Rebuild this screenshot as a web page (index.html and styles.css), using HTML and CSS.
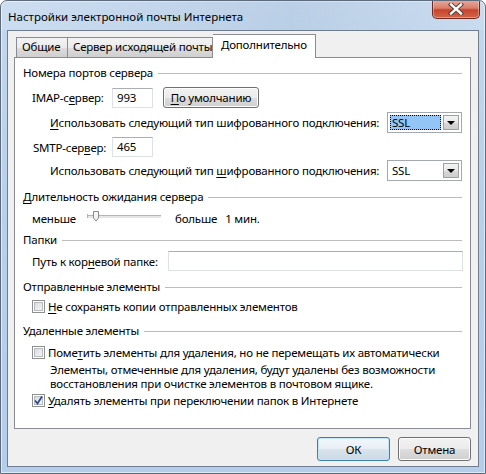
FILE: index.html
```html
<!DOCTYPE html>
<html lang="ru">
<head>
    <meta charset="UTF-8">
    <title>Настройки электронной почты Интернета</title>
    <link rel="stylesheet" href="styles.css">
</head>
<body>

<div class="window">
    <div class="titlebar">
        <span class="title">Настройки электронной почты Интернета</span>
        <div class="close">
            <svg width="16" height="12" viewBox="0 0 16 12">
                <path d="M3 1.5 L13 10.5 M13 1.5 L3 10.5" stroke="#4a3530" stroke-width="4.2" stroke-linecap="square"/>
                <path d="M3 1.5 L13 10.5 M13 1.5 L3 10.5" stroke="#fff" stroke-width="2.4" stroke-linecap="square"/>
            </svg>
        </div>
    </div>

    <div class="client">
        <div class="tabs">
            <div class="tab tab-1">Общие</div>
            <div class="tab tab-2">Сервер исходящей почты</div>
            <div class="tab tab-3 active">Дополнительно</div>
        </div>

        <div class="panel">
            <div class="group first"><span>Номера портов сервера</span></div>

            <div class="row row-imap">
                <label class="lbl-port">IMAP-с<u>е</u>рвер:</label>
                <div class="textbox port">993</div>
                <button class="btn btn-default-port"><u>П</u>о умолчанию</button>
            </div>

            <div class="row row-enc enc-1">
                <label><u>И</u>спользовать следующий тип шифрованного подключения:</label>
                <div class="combo focus">
                    <div class="combo-val">SSL</div>
                    <div class="combo-btn"><span class="arrow"></span></div>
                </div>
            </div>

            <div class="row row-smtp">
                <label class="lbl-port">SMTP-сер<u>в</u>ер:</label>
                <div class="textbox port">465</div>
            </div>

            <div class="row row-enc enc-2">
                <label>Использовать следующий тип <u>ш</u>ифрованного подключения:</label>
                <div class="combo">
                    <div class="combo-val">SSL</div>
                    <div class="combo-btn"><span class="arrow"></span></div>
                </div>
            </div>

            <div class="group g-timeout"><span><u>Д</u>лительность ожидания сервера</span></div>

            <div class="row row-slider">
                <span class="lbl-less">меньше</span>
                <svg class="slider" width="75" height="12" viewBox="0 0 75 12">
                    <rect x="0" y="4" width="74" height="1" fill="#b4b4b4"/>
                    <rect x="0" y="5" width="74" height="2" fill="#e6e6e6"/>
                    <rect x="0" y="3" width="1" height="4" fill="#b4b4b4"/>
                    <path d="M6.5 0.5 H11.5 V7 L9 10 L6.5 7 Z" fill="#f4f4f4" stroke="#8a8a8a"/>
                </svg>
                <span class="lbl-more">больше</span>
                <span class="lbl-min">1 мин.</span>
            </div>

            <div class="group g-folders"><span>Папки</span></div>

            <div class="row row-path">
                <label class="lbl-path">Путь к кор<u>н</u>евой папке:</label>
                <div class="textbox path"></div>
            </div>

            <div class="group g-sent"><span>Отправленные элементы</span></div>

            <div class="row row-check c-sent">
                <span class="cb"></span>
                <span><u>Н</u>е сохранять копии отправленных элементов</span>
            </div>

            <div class="group g-deleted"><span>Удаленные элементы</span></div>

            <div class="row row-check c-mark">
                <span class="cb"></span>
                <span>Поме<u>т</u>ить элементы для удаления, но не перемещать их автоматически</span>
            </div>

            <p class="note">Элементы, отмеченные для удаления, будут удалены без возможности<br>восстановления при очистке элементов в почтовом ящике.</p>

            <div class="row row-check c-purge">
                <span class="cb checked">
                    <svg width="11" height="11" viewBox="0 0 11 11">
                        <path d="M2 5.5 L4.5 8.5 L9 1.5" fill="none" stroke="#2d4a93" stroke-width="1.8"/>
                    </svg>
                </span>
                <span><u>У</u>далять элементы при переключении папок в Интернете</span>
            </div>
        </div>

        <div class="buttons">
            <button class="btn btn-dlg btn-ok">ОК</button>
            <button class="btn btn-dlg">Отмена</button>
        </div>
    </div>
</div>

</body>
</html>
```

FILE: styles.css
```css
* {
    box-sizing: border-box;
}

body {
    margin: 0;
    font-family: "Noto Sans", "Open Sans", sans-serif;
    font-size: 11.5px;
    letter-spacing: -0.2px;
    color: #000;
    background: #fff;
}

u {
    text-decoration: underline;
    text-underline-offset: 2px;
}

.window {
    width: 486px;
    height: 474px;
    display: flex;
    flex-direction: column;
    border: 1px solid #5d6b7c;
    border-radius: 7px 7px 0 0;
    background: linear-gradient(to bottom, #c4d8ee 0%, #b9d0ea 40%, #b4cde9 100%);
    box-shadow: inset 0 0 0 1px rgba(255, 255, 255, 0.55);
    overflow: hidden;
}

.titlebar {
    height: 29px;
    display: flex;
    align-items: flex-start;
    background: linear-gradient(to right, rgba(255,255,255,0.15), rgba(170,190,215,0.35) 60%, rgba(255,255,255,0.1));
}

.title {
    padding: 8px 0 0 7px;
    line-height: 16px;
    letter-spacing: 0;
    color: #000;
}

.close {
    margin-left: auto;
    margin-right: 5px;
    margin-top: -1px;
    width: 48px;
    height: 19px;
    border: 1px solid #6e2a20;
    border-top: none;
    border-radius: 0 0 5px 5px;
    background: linear-gradient(to bottom, #e8ab9e 0%, #da7e6b 45%, #c7452c 55%, #d2664a 100%);
    box-shadow: inset 0 0 0 1px rgba(255, 255, 255, 0.35);
    display: flex;
    align-items: center;
    justify-content: center;
}

.client {
    flex: 1;
    margin: 0 6px 6px 6px;
    border: 1px solid #6f7d8e;
    background: #f0f0f0;
    padding: 3px 7px 0 6px;
    display: flex;
    flex-direction: column;
}

.tabs {
    height: 24px;
    margin-bottom: -1px;
    margin-left: 2px;
    display: flex;
    align-items: flex-end;
    position: relative;
    z-index: 1;
}

.tab {
    height: 21px;
    border: 1px solid #898c95;
    border-right: none;
    background: linear-gradient(to bottom, #f3f3f3 0%, #ebebeb 50%, #dddddd 51%, #cfcfcf 100%);
    padding-left: 5px;
    line-height: 18px;
    white-space: nowrap;
}

.tab-1 {
    width: 51px;
}

.tab-2 {
    width: 146px;
    border-right: 1px solid #898c95;
}

.tab-3 {
    width: 103px;
}

.tab.active {
    height: 24px;
    background: #fff;
    border-right: 1px solid #898c95;
    border-left: none;
    border-bottom: none;
    padding-left: 8px;
    line-height: 20px;
}

.panel {
    height: 372px;
    border: 1px solid #898c95;
    background: #fff;
    padding: 7px 8px 0 8px;
    display: flex;
    flex-direction: column;
}

.group {
    height: 16px;
    display: flex;
    align-items: center;
    line-height: 16px;
}

.group::after {
    content: "";
    flex: 1;
    height: 1px;
    margin-left: 5px;
    background: #bcbcbc;
}

.g-timeout { margin-top: 8px; }
.g-folders { margin-top: 4px; }
.g-sent { margin-top: 8px; }
.g-deleted { margin-top: 9px; }

.row {
    display: flex;
    align-items: center;
    height: 20px;
    white-space: nowrap;
}

.row-imap {
    margin-top: 6px;
    height: 21px;
    padding-left: 9px;
}

.row-smtp {
    margin-top: 4px;
    padding-left: 10px;
}

.lbl-port {
    width: 79px;
}

.row-imap .lbl-port {
    width: 80px;
}

.textbox {
    height: 20px;
    background: #fff;
    border: 1px solid #dde1e6;
    border-top-color: #abadb3;
    padding-left: 4px;
    line-height: 18px;
}

.port {
    width: 41px;
}

.row-enc {
    height: 21px;
    padding-left: 27px;
}

.enc-1 { margin-top: 4px; }
.enc-2 { margin-top: 3px; }

.combo {
    margin-left: auto;
    flex-shrink: 0;
    width: 75px;
    height: 21px;
    border: 1px solid #a4a9b0;
    background: #fff;
    padding: 2px;
    display: flex;
}

.combo-val {
    flex: 1;
    line-height: 15px;
    padding-left: 2px;
    margin-right: 2px;
}

.combo.focus .combo-val {
    background: #93c6f7;
    outline: 1px dotted #000;
    outline-offset: -1px;
}

.combo-btn {
    width: 16px;
    height: 15px;
    border: 1px solid #a0a0a0;
    background: linear-gradient(to bottom, #f4f4f4 0%, #e8e8e8 50%, #d9d9d9 51%, #cdcdcd 100%);
    display: flex;
    align-items: center;
    justify-content: center;
}

.arrow {
    width: 0;
    height: 0;
    border-left: 4px solid transparent;
    border-right: 4px solid transparent;
    border-top: 4px solid #000;
    margin-top: 1px;
}

.btn {
    font-family: inherit;
    font-size: 11.5px;
    letter-spacing: -0.2px;
    color: #000;
    border: 1px solid #707070;
    border-radius: 3px;
    background: linear-gradient(to bottom, #f2f2f2 0%, #ebebeb 50%, #dddddd 51%, #cfcfcf 100%);
    box-shadow: inset 0 0 0 1px #fcfcfc;
    padding: 0;
    cursor: default;
}

.btn-default-port {
    margin-left: 10px;
    width: 96px;
    height: 21px;
}

.row-slider {
    margin-top: 3px;
    padding-left: 9px;
}

.lbl-less {
    width: 55px;
}

.slider {
    display: block;
    margin-top: -3px;
}

.lbl-more {
    margin-left: 13px;
}

.lbl-min {
    margin-left: 8px;
}

.row-path {
    margin-top: 3px;
    padding-left: 9px;
}

.lbl-path {
    width: 136px;
    flex-shrink: 0;
}

.path {
    flex: 1;
    margin-right: -1px;
}

.row-check {
    height: 16px;
    padding-left: 9px;
}

.c-sent { margin-top: 3px; }
.c-mark { margin-top: 5px; }
.c-purge { margin-top: 1px; }

.cb {
    flex-shrink: 0;
    width: 13px;
    height: 13px;
    margin-right: 3px;
    border: 1px solid #8e8f8f;
    background: linear-gradient(135deg, #cfd2d6 0%, #eceded 60%, #f7f7f7 100%);
    box-shadow: inset 0 0 0 1px #fff, inset 0 0 0 2px #b7bbc1;
    display: flex;
    align-items: center;
    justify-content: center;
}

.note {
    margin: 3px 0 0 0;
    padding-left: 27px;
    line-height: 14px;
    white-space: nowrap;
}

.buttons {
    margin-top: 8px;
    display: flex;
    justify-content: flex-end;
    gap: 8px;
}

.btn-dlg {
    width: 73px;
    height: 24px;
}

.btn-ok {
    border-color: #3c7fb1;
    box-shadow: inset 0 0 0 1px #c4e5f6;
    background: linear-gradient(to bottom, #f1f6f9 0%, #e8eff4 50%, #d9e4ec 51%, #cbd9e4 100%);
}
```
